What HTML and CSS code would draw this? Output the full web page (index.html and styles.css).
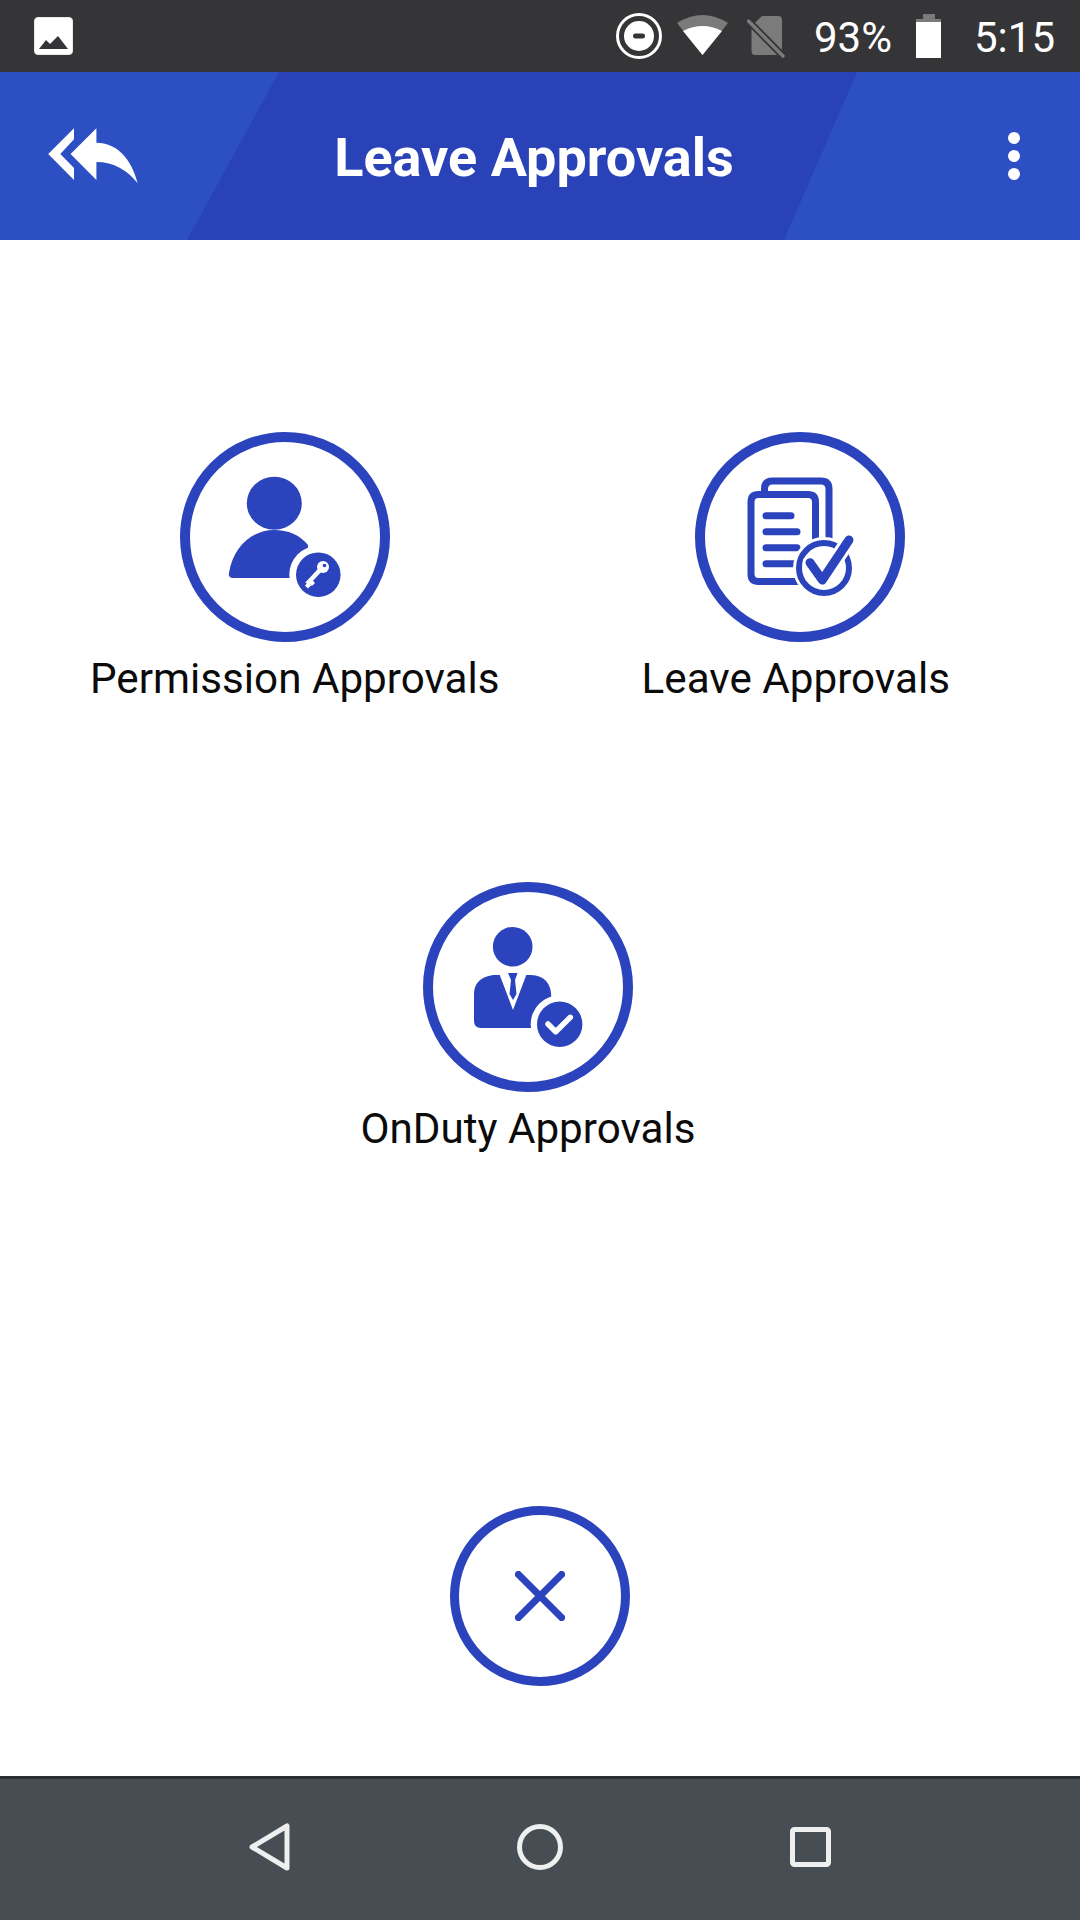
FILE: index.html
```html
<!DOCTYPE html>
<html lang="en">
<head>
<meta charset="utf-8">
<title>Leave Approvals</title>
<link rel="stylesheet" href="styles.css">
</head>
<body>
<div class="page">
  <div class="status">
    <svg class="st-image" width="39" height="38" viewBox="0 0 39 38"><rect x="0.5" y="0.5" width="38" height="37" rx="3.5" fill="#fff" stroke="#e8e8e8"/><path d="M5 32 L12 23 L16 27 L24 19 L34 32 Z" fill="#353436"/></svg>
    <div class="status-right">
      <svg class="st-dnd" width="46" height="46" viewBox="0 0 46 46"><circle cx="23" cy="23" r="21.5" fill="none" stroke="#fff" stroke-width="3"/><circle cx="23" cy="23" r="15" fill="#fff"/><rect x="17" y="20.5" width="12" height="5" rx="2.5" fill="#353436"/></svg>
      <svg class="st-wifi" width="51" height="40" viewBox="0 0 51 40"><path d="M25.5 40 L0 8 Q25.5 -8 51 8 Z" fill="#7b7b7b"/><path d="M25.5 40 L6 16 Q25.5 6 45 16 Z" fill="#fff"/></svg>
      <svg class="st-sim" width="38" height="42" viewBox="0 0 38 42"><path d="M15 0 H31 Q35 0 35 4 V39 H8 Q4.500 39 4.500 35 V10 Z" fill="#7b7b7b"/><path d="M0.500 4 L37 41" stroke="#353436" stroke-width="7"/><path d="M1.500 5 L36 40" stroke="#7b7b7b" stroke-width="3.500" stroke-linecap="round"/></svg>
      <span class="st-text st-pct">93%</span>
      <svg class="st-batt" width="25" height="44" viewBox="0 0 25 44"><path d="M7 0 H19 V5 H25 V8 H0 V5 H7 Z" fill="#7b7b7b"/><rect y="8" width="25" height="36" fill="#fff"/></svg>
      <span class="st-text st-time">5:15</span>
    </div>
  </div>

  <header class="toolbar">
    <svg class="back" width="90" height="56" viewBox="48 128 90 56"><path d="M48.200 154 L74 128.300 V139.300 L60.300 154 L74 168 V180 Z" fill="#fff"/><path d="M70.600 154 L96.400 128.300 V142.700 C117 143 131 158 137.700 183.300 C127 170 114 162 96.400 162 V180 Z" fill="#fff"/></svg>
    <h1 class="title">Leave Approvals</h1>
    <div class="dots"><i></i><i></i><i></i></div>
  </header>

  <main class="content">
    <div class="row-top">
      <div class="tile">
        <div class="ring ring-left">
          <svg width="190" height="190" viewBox="10 10 190 190">
            <ellipse cx="94.300" cy="71.300" rx="27.500" ry="26.500" fill="#2b43bc"/>
            <path d="M53 146 Q48 146 49 141 C53 115 72 98 94 98 C108 98 120 103 128 113 V146 Z" fill="#2b43bc"/>
            <circle cx="138.300" cy="142.700" r="29" fill="#fff"/>
            <circle cx="138.300" cy="142.700" r="22.300" fill="#2b43bc"/>
            <path d="M140 138 L127 152 M130 149 L133.500 152.500 M126.500 152 L129.500 155" stroke="#fff" stroke-width="4.500" fill="none"/>
            <circle cx="143" cy="135" r="6" fill="#fff"/>
            <circle cx="144.500" cy="133.500" r="1.800" fill="#2b43bc"/>
          </svg>
        </div>
        <div class="label">Permission Approvals</div>
      </div>
      <div class="tile">
        <div class="ring ring-right">
          <svg width="190" height="190" viewBox="10 10 190 190">
            <g fill="none" stroke="#2b43bc" stroke-width="7">
              <path d="M69.500 59 V57 Q69.500 49 77.500 49 H126 Q134 49 134 57 V108"/>
              <path d="M120.500 108 V70 Q120.500 62.500 113 62.500 H63.500 Q56 62.500 56 70 V142 Q56 149.500 63.500 149.500 H104"/>
            </g>
            <g stroke="#2b43bc" stroke-width="7" stroke-linecap="round">
              <path d="M71 83.700 H96"/><path d="M71 99.700 H102"/><path d="M71 115.700 H102"/><path d="M71 131.700 H102"/>
            </g>
            <circle cx="129" cy="136" r="31" fill="#fff"/>
            <circle cx="129" cy="136" r="25" fill="none" stroke="#2b43bc" stroke-width="6"/>
            <path d="M115 130.700 L127.300 148 L154 108" fill="none" stroke="#fff" stroke-width="15" stroke-linejoin="round" stroke-linecap="round"/>
            <path d="M115 130.700 L127.300 148 L154 108" fill="none" stroke="#2b43bc" stroke-width="9" stroke-linecap="round" stroke-linejoin="round"/>
          </svg>
        </div>
        <div class="label">Leave Approvals</div>
      </div>
    </div>
    <div class="row-mid">
      <div class="tile">
        <div class="ring">
          <svg width="190" height="190" viewBox="10 10 190 190">
            <circle cx="89.700" cy="64.700" r="19.800" fill="#2b43bc"/>
            <path d="M51 139 V112 Q51 96 70 93 L76.700 93 L90 128 L103.300 93 L108 93 Q128 94 128.300 115 V146 H58 Q51 146 51 139 Z" fill="#2b43bc"/>
            <path d="M85 91 H94.500 L92 98 L93.500 112 L90 118 L86.500 112 L88 98 Z" fill="#2b43bc"/>
            <circle cx="136.700" cy="142.300" r="29" fill="#fff"/>
            <circle cx="136.700" cy="142.300" r="22.700" fill="#2b43bc"/>
            <path d="M125 142 L132.700 149.700 L147.300 135.300" fill="none" stroke="#fff" stroke-width="5.500" stroke-linecap="round" stroke-linejoin="round"/>
          </svg>
        </div>
        <div class="label">OnDuty Approvals</div>
      </div>
    </div>
    <div class="close">
      <svg width="50" height="50" viewBox="0 0 50 50"><path d="M1 1 L49 49 M49 1 L1 49" stroke="#2b43bc" stroke-width="7"/></svg>
    </div>
  </main>

  <nav class="navbar">
    <div class="nav-cell"><svg width="42" height="48" viewBox="0 0 42 48"><path d="M3 24 L38 3 V45 Z" fill="none" stroke="#eef0f0" stroke-width="5" stroke-linejoin="round"/></svg></div>
    <div class="nav-cell"><svg width="46" height="46" viewBox="0 0 46 46"><circle cx="23" cy="23" r="20.500" fill="none" stroke="#eef0f0" stroke-width="5"/></svg></div>
    <div class="nav-cell"><svg width="41" height="40" viewBox="0 0 41 40"><rect x="2.500" y="2.500" width="36" height="35" rx="2" fill="none" stroke="#eef0f0" stroke-width="5"/></svg></div>
  </nav>
</div>
</body>
</html>
```

FILE: styles.css
```css
* { box-sizing: border-box; }
html, body { margin: 0; padding: 0; }
body { font-family: Roboto, "Liberation Sans", sans-serif; background: #fff; }

.page { width: 1080px; height: 1920px; display: flex; flex-direction: column; overflow: hidden; }

.status { height: 72px; flex: none; background: #353436; display: flex; align-items: center; padding: 0 25px 0 34px; }
.status svg { display: block; flex: none; }
.status-right { margin-left: auto; display: flex; align-items: center; }
.st-text { color: #fff; font-size: 42px; line-height: 72px; margin-top: 3px; }
.st-wifi { margin-left: 15px; margin-top: -2px; }
.st-sim { margin-left: 19px; margin-top: 1px; }
.st-pct { margin-left: 29px; }
.st-batt { margin-left: 24px; }
.st-time { margin-left: 33px; }

.toolbar { position: relative; height: 168px; flex: none; background: #2d4fc4; display: flex; align-items: center; justify-content: space-between; padding: 0 60px 0 48px; }
.toolbar::before { content: ""; position: absolute; inset: 0; background: #2a42b8; clip-path: polygon(279px 0, 857px 0, 784px 100%, 187px 100%); }
.back, .title, .dots { position: relative; }
.back { display: block; }
.title { margin: 4px 78px 0 0; color: #fff; font-size: 54px; line-height: 60px; font-weight: 700; }
.dots { width: 12px; display: flex; flex-direction: column; gap: 6px; }
.dots i { display: block; width: 12px; height: 12px; border-radius: 50%; background: #fff; }

.content { flex: 1; padding-top: 192px; display: flex; flex-direction: column; }
.row-top { display: flex; padding-left: 90px; gap: 142px; }
.row-mid { display: flex; justify-content: center; margin-top: 179px; padding-right: 24px; }
.tile { display: flex; flex-direction: column; align-items: center; }
.ring { width: 210px; height: 210px; border: 10px solid #2b43bc; border-radius: 50%; background: #fff; }
.ring svg { display: block; }
.ring-left { margin-right: 20px; }
.ring-right { margin-left: 8px; }
.label { margin-top: 13px; font-size: 42.200px; line-height: 48px; color: #0b0b0b; white-space: nowrap; }

.close { width: 180px; height: 180px; margin: 353px auto 0; border: 9px solid #2b43bc; border-radius: 50%; display: flex; align-items: center; justify-content: center; }
.close svg { display: block; }

.navbar { height: 144px; flex: none; background: #464d53; border-top: 3px solid #2a2f33; padding-bottom: 5px; display: flex; justify-content: center; align-items: center; }
.nav-cell { width: 270px; display: flex; justify-content: center; }
.nav-cell svg { display: block; }
```
